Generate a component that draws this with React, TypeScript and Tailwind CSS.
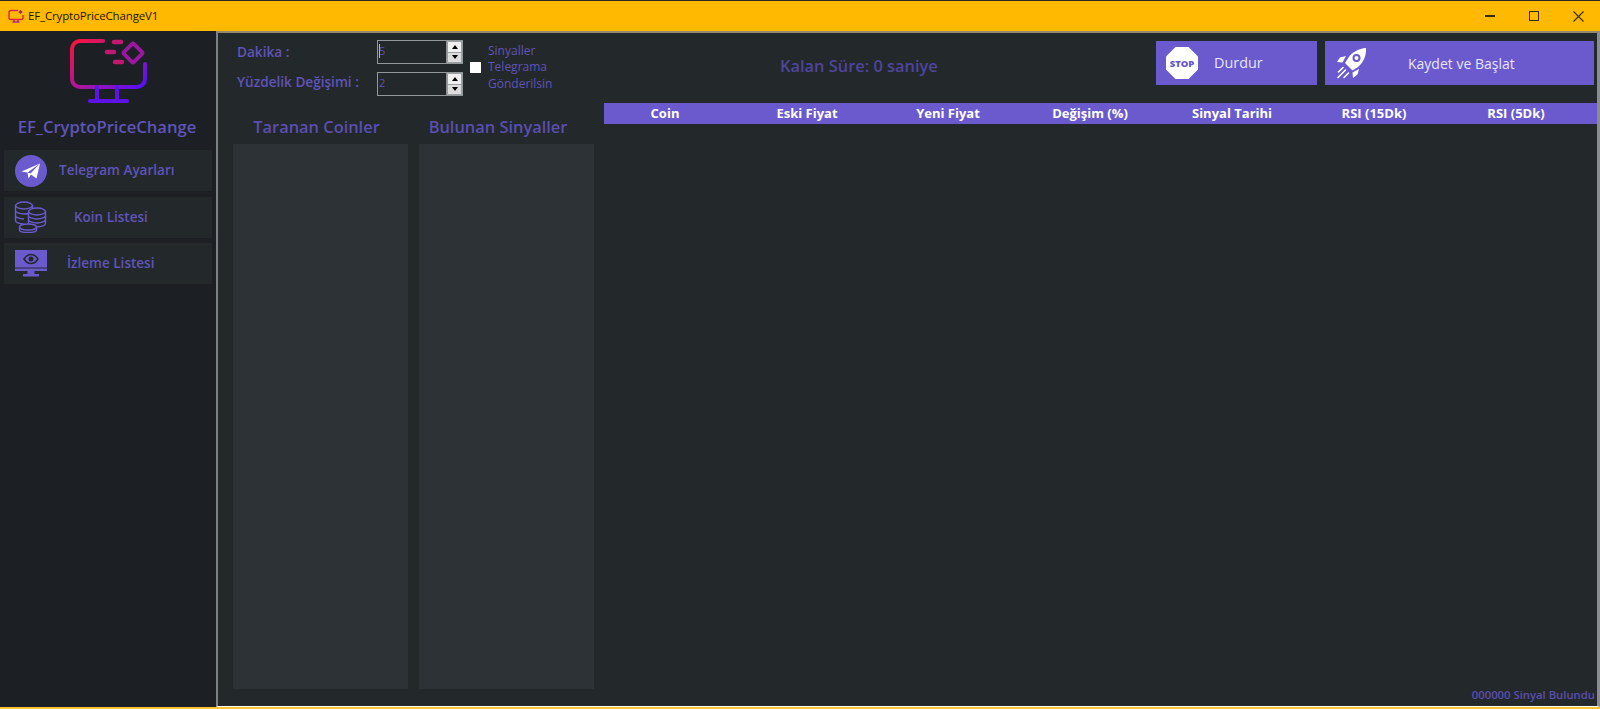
const purple = "#6a5acd";

function TitleIcon() {
  return (
    <svg width="16" height="14" viewBox="0 0 16 14" fill="none" className="shrink-0">
      <path d="M10 1.5H3a2 2 0 0 0-2 2v5a2 2 0 0 0 2 2h10a2 2 0 0 0 2-2V6" stroke="#d6264f" strokeWidth="1.4" />
      <path d="M6 11v2M10 11v2M4.5 13.2h7" stroke="#a31c8c" strokeWidth="1.2" />
      <rect x="11" y="1.5" width="3" height="3" fill="#a31c8c" transform="rotate(45 12.5 3)" />
    </svg>
  );
}

function Logo() {
  return (
    <svg width="78" height="66" viewBox="0 0 78 66" fill="none">
      <defs>
        <linearGradient id="logoGrad" gradientUnits="userSpaceOnUse" x1="3" y1="3" x2="50" y2="65">
          <stop offset="0" stopColor="#f8143a" />
          <stop offset="0.55" stopColor="#a616a4" />
          <stop offset="1" stopColor="#5a10f0" />
        </linearGradient>
      </defs>
      <path
        d="M34 3H11a8 8 0 0 0-8 8v30a8 8 0 0 0 8 8h57a8 8 0 0 0 8-8V26"
        stroke="url(#logoGrad)"
        strokeWidth="4"
        strokeLinecap="round"
      />
      <path d="M28 49v14M48 49v14M21 63h37" stroke="#5d12e6" strokeWidth="4" strokeLinecap="round" />
      <path d="M45 4h7M38 14h7M46 24h7" stroke="#c2186f" strokeWidth="4.5" strokeLinecap="round" />
      <rect x="57" y="8" width="14" height="14" rx="1.5" stroke="#9a189f" strokeWidth="4" transform="rotate(45 64 15)" />
    </svg>
  );
}

function TelegramIcon() {
  return (
    <svg width="32" height="32" viewBox="0 0 32 32">
      <circle cx="16" cy="16" r="16" fill={purple} />
      <path d="M6.5 16.5 25 8.5l-3.5 15-5.5-4-2.5 4-1-6z" fill="#fff" />
      <path d="M12.5 17.5 25 8.5 15.5 18.5z" fill={purple} />
    </svg>
  );
}

function CoinsIcon() {
  return (
    <svg width="33" height="32" viewBox="0 0 33 32" fill="none" stroke={purple} strokeWidth="1.4">
      <ellipse cx="10" cy="4.5" rx="8.5" ry="3.5" />
      <path d="M1.5 4.5v15c0 1.9 3.5 3.5 8 3.5M1.5 9.5c0 1.9 3.8 3.5 8.5 3.5 1.5 0 3-.2 4.2-.5M1.5 14.500c0 1.9 3.8 3.5 8.5 3.5M18.500 4.500V7" />
      <ellipse cx="23" cy="10.5" rx="8.5" ry="3.5" />
      <path d="M14.500 10.500v12c0 1.900 3.800 3.500 8.500 3.500s8.500-1.600 8.500-3.500v-12M14.500 14.500c0 1.900 3.800 3.500 8.500 3.500s8.500-1.600 8.500-3.500M14.500 18.500c0 1.900 3.800 3.500 8.500 3.500s8.500-1.600 8.500-3.500" />
      <ellipse cx="14" cy="26" rx="8.5" ry="3" fill="#23282b" />
      <path d="M5.500 26v3c0 1.500 3.800 2.500 8.500 2.500s8.500-1 8.500-2.500v-3" />
    </svg>
  );
}

function MonitorEyeIcon() {
  return (
    <svg width="32" height="27" viewBox="0 0 32 27">
      <rect x="0" y="0" width="32" height="17.5" fill={purple} />
      <rect x="0" y="18.5" width="32" height="2.5" fill={purple} />
      <path d="M12.500 21h7v3h-7z" fill={purple} />
      <path d="M8 24h16v2.500H8z" fill={purple} />
      <path d="M9 9s3-4.500 7-4.500S23 9 23 9s-3 4.500-7 4.500S9 9 9 9z" fill="none" stroke="#23282b" strokeWidth="1.5" />
      <circle cx="16" cy="9" r="2.5" fill="#23282b" />
    </svg>
  );
}

function StopIcon() {
  return (
    <svg width="32" height="32" viewBox="0 0 32 32">
      <path d="M9.500 0h13L32 9.500v13L22.500 32h-13L0 22.500v-13z" fill="#fff" />
      <text x="16" y="19.5" textAnchor="middle" fontSize="9.5" fontWeight="800" fill={purple} fontFamily="'Open Sans', sans-serif">
        STOP
      </text>
    </svg>
  );
}

function RocketIcon() {
  return (
    <svg width="33" height="33" viewBox="0 0 33 33" fill="none">
      <path d="M31 1C24 1.500 17 5 13.500 10.500L10 16l7.500 7.500 5.500-3.500C28 16 31.500 9 31 1z" fill="#fff" />
      <circle cx="21.5" cy="11" r="4" fill={purple} />
      <circle cx="21.5" cy="11" r="2" fill="#fff" />
      <path d="M11 9 5 10.500 2 15l5.500.5zM24 22l-1.500 5.500L18 31l-.5-5.500z" fill="#fff" />
      <path d="M8 20.500 3.500 25M10.500 23 3 30.500M13.500 26 9 30.500" stroke="#fff" strokeWidth="1.6" strokeLinecap="round" />
    </svg>
  );
}

function Spin({ value, caret }: { value: string; caret?: boolean }) {
  return (
    <div className="flex h-[24px] w-[86px] border border-[#92989a] bg-[#23282b]">
      <div className="flex flex-1 items-start pl-[1px] text-[11px] leading-[20px] text-[#5c50b4]">
        {caret && <div className="mt-[3px] mr-[-1px] h-[14px] w-[1px] bg-[#b8bac0]" />}
        {value}
      </div>
      <div className="flex w-[16px] flex-col gap-[1px] border-l border-[#8d8f90] bg-[#9ea0a0] p-[1px]">
        <div className="flex flex-1 items-center justify-center bg-[#efefef]">
          <div className="h-0 w-0 border-x-[3px] border-b-[4px] border-x-transparent border-b-black" />
        </div>
        <div className="flex flex-1 items-center justify-center bg-[#dcdcdc]">
          <div className="h-0 w-0 border-x-[3px] border-t-[4px] border-x-transparent border-t-black" />
        </div>
      </div>
    </div>
  );
}

const menu = [
  { label: "Telegram Ayarları", icon: <TelegramIcon />, text: "pl-[12px]" },
  { label: "Koin Listesi", icon: <CoinsIcon />, text: "pl-[27px]" },
  { label: "İzleme Listesi", icon: <MonitorEyeIcon />, text: "pl-[20px]" },
];

const columns = [
  { label: "Coin", width: "w-[122px]" },
  { label: "Eski Fiyat", width: "w-[162px]" },
  { label: "Yeni Fiyat", width: "w-[120px]" },
  { label: "Değişim (%)", width: "w-[164px]" },
  { label: "Sinyal Tarihi", width: "w-[120px]" },
  { label: "RSI (15Dk)", width: "w-[164px]" },
  { label: "RSI (5Dk)", width: "w-[120px]" },
];

const lists = [
  { title: "Taranan Coinler", shift: "pr-[8px]" },
  { title: "Bulunan Sinyaller", shift: "pr-[17px]" },
];

export default function App() {
  return (
    <div className="flex h-[709px] w-[1600px] flex-col overflow-hidden border-t border-b-2 border-t-[#2a2a20] border-b-[#ffc233] bg-[#1c2024] font-['Open_Sans',sans-serif]">
      {/* title bar */}
      <div className="flex h-[30px] shrink-0 items-center bg-[#ffb900] pl-[8px] text-black">
        <TitleIcon />
        <span className="ml-[4px] text-[11.5px] tracking-[-0.15px] text-[#1d1600]">EF_CryptoPriceChangeV1</span>
        <div className="ml-auto flex items-center">
          <div className="flex h-[30px] w-[44px] items-center justify-center">
            <div className="h-[1.5px] w-[10px] bg-[#3a2c00]" />
          </div>
          <div className="flex h-[30px] w-[44px] items-center justify-center">
            <div className="h-[10px] w-[10px] border border-[#3a2c00]" />
          </div>
          <div className="flex h-[30px] w-[44px] items-center justify-center">
            <svg width="11" height="11" viewBox="0 0 11 11" stroke="#3a2c00" strokeWidth="1.1">
              <path d="M.5.5l10 10M10.500.5l-10 10" />
            </svg>
          </div>
        </div>
      </div>

      <div className="flex min-h-0 flex-1">
        {/* sidebar */}
        <div className="flex w-[216px] shrink-0 flex-col items-stretch px-[4px]">
          <div className="flex justify-center pt-[7px]">
            <Logo />
          </div>
          <div className="mt-[11px] mb-[11px] pr-[2px] text-center text-[16.6px] leading-[24px] font-semibold whitespace-nowrap text-[#5f54b8]">
            EF_CryptoPriceChange
          </div>
          <div className="flex flex-col gap-[5.5px]">
            {menu.map((item) => (
              <div key={item.label} className="flex h-[41px] items-center bg-[#23282b] pl-[10px]">
                <div className="flex w-[33px] justify-center">{item.icon}</div>
                <span className={`text-[13.5px] font-semibold text-[#5f54b8] ${item.text}`}>{item.label}</span>
              </div>
            ))}
          </div>
        </div>

        {/* main */}
        <div className="flex min-w-0 flex-1 border-t-2 border-r-[3px] border-b border-l-2 border-t-[#8f8a70] border-r-[#8a8d90] border-b-white border-l-[#7d8084] bg-[#23282b]">
          <div className="flex w-[386px] shrink-0 flex-col">
            <div className="flex h-[70px] pt-[7px] pl-[19px]">
              <div className="flex w-[140px] flex-col gap-[7px] text-[13.6px] leading-[23px] font-semibold text-[#5f54b8]">
                <div>Dakika :</div>
                <div className="whitespace-nowrap">Yüzdelik Değişimi :</div>
              </div>
              <div className="flex flex-col gap-[8px]">
                <Spin value="5" caret />
                <Spin value="2" />
              </div>
              <div className="ml-[7px] flex items-center gap-[7px] pb-[8px]">
                <div className="h-[11px] w-[11px] bg-white" />
                <div className="text-[12px] leading-[16.5px] font-medium text-[#5f54b8]">
                  Sinyaller
                  <br />
                  Telegrama
                  <br />
                  Gönderilsin
                </div>
              </div>
            </div>
            <div className="flex min-h-0 flex-1 gap-[11px] pb-[17px] pl-[15px]">
              {lists.map((list) => (
                <div key={list.title} className="flex w-[175px] flex-col">
                  <div className={`h-[41px] pt-[12px] text-center text-[16.4px] leading-[24px] font-semibold whitespace-nowrap text-[#5a4fb0] ${list.shift}`}>
                    {list.title}
                  </div>
                  <div className="flex-1 bg-[#2d3236]" />
                </div>
              ))}
            </div>
          </div>

          <div className="flex min-w-0 flex-1 flex-col">
            <div className="flex h-[70px] shrink-0 items-start pt-[8px]">
              <div className="w-[552px] pt-[13px] pl-[176px] text-[16.4px] leading-[24px] font-semibold text-[#4e459c]">
                Kalan Süre: 0 saniye
              </div>
              <button className="flex h-[44px] w-[161px] items-center bg-[#6a5acd] pl-[10px] text-[14.4px] font-medium text-[#e8e4fa]">
                <StopIcon />
                <span className="ml-[16px]">Durdur</span>
              </button>
              <button className="ml-[8px] flex h-[44px] w-[269px] items-center bg-[#6a5acd] pl-[10px] text-[14px] font-medium text-[#e8e4fa]">
                <RocketIcon />
                <span className="ml-[40px]">Kaydet ve Başlat</span>
              </button>
            </div>
            <div className="flex h-[21px] shrink-0 items-center bg-[#6a5acd] text-[13px] font-bold text-white">
              {columns.map((col) => (
                <div key={col.label} className={`${col.width} shrink-0 text-center whitespace-nowrap`}>
                  {col.label}
                </div>
              ))}
            </div>
            <div className="flex flex-1 items-end justify-end pr-[2px] pb-[2px] text-[11.3px] font-semibold text-[#5a4fb0]">
              000000 Sinyal Bulundu
            </div>
          </div>
        </div>
      </div>
    </div>
  );
}
